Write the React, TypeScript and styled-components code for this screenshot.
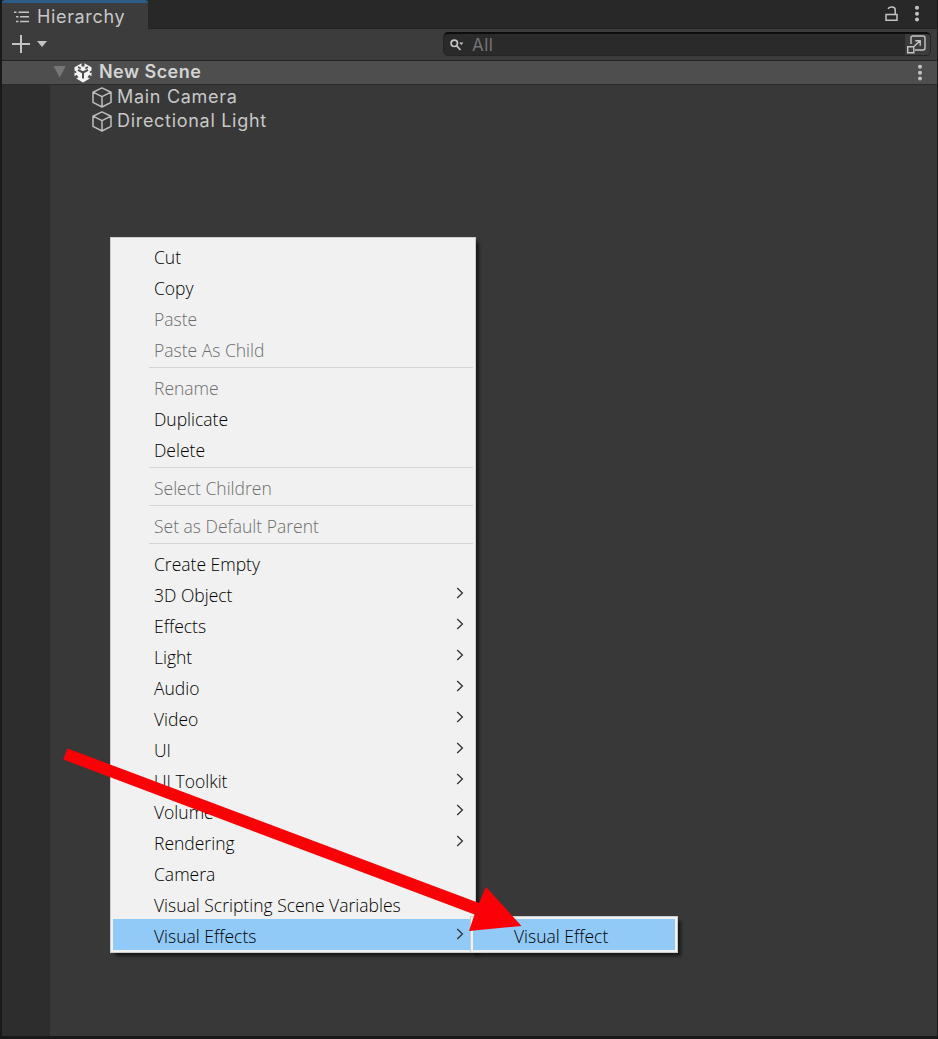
import React from "react";
import styled, { createGlobalStyle } from "styled-components";

const GlobalStyle = createGlobalStyle`
  * { box-sizing: border-box; }
  body { margin: 0; background: #191919; }
`;

const Window = styled.div`
  position: relative;
  display: flex;
  flex-direction: column;
  width: 938px;
  height: 1039px;
  padding: 0 1px 3px 2px;
  overflow: hidden;
  background: #191919;
  font-family: Inter, "Liberation Sans", sans-serif;
  color: #c8c8c8;
`;

const TabBar = styled.div`
  display: flex;
  justify-content: space-between;
  flex: none;
  height: 29px;
  background: #282828;
  border-bottom: 1px solid #232323;
`;

const Tab = styled.div`
  display: flex;
  align-items: center;
  width: 146px;
  height: 29px;
  padding: 2px 0 0 12px;
  gap: 7px;
  background: #3c3c3c;
  border-top: 3px solid #2c5d87;
  border-radius: 3px 3px 0 0;
`;

const Label = styled.span<{ $size?: number; $spacing: number; $bold?: boolean }>`
  font-size: ${(p) => p.$size ?? 18}px;
  line-height: 24px;
  letter-spacing: ${(p) => p.$spacing}px;
  font-weight: ${(p) => (p.$bold ? 600 : 400)};
  white-space: nowrap;
`;

const TabActions = styled.div`
  display: flex;
  gap: 16px;
  padding: 5px 17px 0 0;
`;

const Toolbar = styled.div`
  display: flex;
  justify-content: space-between;
  flex: none;
  height: 32px;
  padding: 3px 6px 0 9px;
  background: #3c3c3c;
  border-bottom: 1px solid #222;
`;

const SearchBox = styled.div`
  display: flex;
  width: 488px;
  height: 24px;
  background: #2a2a2a;
  border: 1px solid #242424;
  border-top: 2px solid #0d0d0d;
  border-radius: 5px;
  overflow: hidden;
`;

const SearchField = styled.div`
  display: flex;
  flex: 1;
  align-items: center;
  gap: 8px;
  padding-left: 6px;
  color: #747474;
`;

const PickerButton = styled.div`
  width: 25px;
  height: 22px;
  background: #3c3c3c;
`;

const SceneRow = styled.div`
  display: flex;
  align-items: center;
  flex: none;
  height: 24px;
  padding: 0 14px 1px 51px;
  background: #4e4e4e;
  border-bottom: 1px solid #2a2a2a;
`;

const SceneName = styled.div`
  flex: 1;
  padding-left: 6px;
  color: #d4d4d4;
`;

const Body = styled.div`
  display: flex;
  flex: 1;
`;

const Gutter = styled.div`
  width: 48px;
  background: #2d2d2d;
`;

const Tree = styled.div`
  flex: 1;
  background: #383838;
`;

const TreeItem = styled.div`
  display: flex;
  align-items: center;
  height: 24px;
  padding: 0 0 1px 42px;
  gap: 5px;
  svg { margin-top: 2px; }
`;

const Menu = styled.div<{ $x: number; $y: number; $width: number }>`
  position: absolute;
  left: ${(p) => p.$x}px;
  top: ${(p) => p.$y}px;
  width: ${(p) => p.$width}px;
  padding: 2px;
  background: #f1f1f1;
  border: 1px solid #ccc;
  box-shadow: 4px 4px 3px -1px rgba(0, 0, 0, 0.55);
  font-family: "Open Sans", "Noto Sans", sans-serif;
`;

const MenuRow = styled.div<{ $disabled?: boolean; $active?: boolean }>`
  display: flex;
  align-items: center;
  justify-content: space-between;
  height: 31px;
  padding: 3px 9px 0 41px;
  color: ${(p) => (p.$disabled ? "#6d6d6d" : "#000")};
  background: ${(p) => (p.$active ? "#91c9f7" : "transparent")};
  svg { margin-top: -5px; }
`;

const MenuText = styled.span<{ $spacing: number }>`
  font-size: 17.5px;
  line-height: 24px;
  font-weight: 350;
  letter-spacing: ${(p) => p.$spacing}px;
  white-space: nowrap;
`;

const Separator = styled.div`
  height: 1px;
  margin: 3px 0 3px 36px;
  background: #d4d4d4;
`;

const Annotation = styled.svg`
  position: absolute;
  left: 0;
  top: 0;
  pointer-events: none;
`;

const Cube = () => (
  <svg width="20" height="21" viewBox="0 0 20 21" fill="none" stroke="#bdbdbd" strokeWidth="1.5" strokeLinejoin="round">
    <path d="M10 .9 19 5.2V15.4L10 20 1 15.4V5.2ZM1 5.2 10 9.7 19 5.2M10 9.7V20" />
  </svg>
);

const Dots = () => (
  <svg width="6" height="17" viewBox="0 0 6 17" fill="#c4c4c4">
    <circle cx="3" cy="2.7" r="2" />
    <circle cx="3" cy="8.7" r="2" />
    <circle cx="3" cy="14.6" r="2" />
  </svg>
);

const Chevron = () => (
  <svg width="8" height="12" viewBox="0 0 8 12" fill="none" stroke="#333" strokeWidth="1.3">
    <path d="M1.2 1 6.4 6 1.2 11" />
  </svg>
);

type Entry = { label: string; spacing?: number; disabled?: boolean; sub?: boolean; active?: boolean } | null;

const entries: Entry[] = [
  { label: "Cut" },
  { label: "Copy" },
  { label: "Paste", disabled: true },
  { label: "Paste As Child", disabled: true },
  null,
  { label: "Rename", disabled: true },
  { label: "Duplicate" },
  { label: "Delete" },
  null,
  { label: "Select Children", disabled: true },
  null,
  { label: "Set as Default Parent", disabled: true },
  null,
  { label: "Create Empty" },
  { label: "3D Object", sub: true },
  { label: "Effects", sub: true },
  { label: "Light", sub: true },
  { label: "Audio", sub: true },
  { label: "Video", sub: true },
  { label: "UI", sub: true },
  { label: "UI Toolkit", sub: true },
  { label: "Volume", sub: true },
  { label: "Rendering", sub: true },
  { label: "Camera" },
  { label: "Visual Scripting Scene Variables" },
  { label: "Visual Effects", sub: true, active: true },
];

export default function App() {
  return (
    <>
      <GlobalStyle />
      <Window>
        <TabBar>
          <Tab>
            <svg width="16" height="12" viewBox="0 0 16 12" stroke="#c4c4c4" strokeWidth="1.4">
              <path d="M0 1.2H2.5M4.5 1.2H15M2 5.8H4.5M6 5.8H15M2 10.5H4.5M6 10.5H15" />
            </svg>
            <Label $spacing={0.65}>Hierarchy</Label>
          </Tab>
          <TabActions>
            <svg width="13" height="17" viewBox="0 0 13 17" fill="none" stroke="#c4c4c4" strokeWidth="1.5">
              <path d="M1 9.5H12V15.3H1ZM10.2 9.5V5Q10.2 2 7 2 4.2 2 3 3.7" />
            </svg>
            <Dots />
          </TabActions>
        </TabBar>
        <Toolbar>
          <svg width="40" height="24" viewBox="0 0 40 24" fill="#c4c4c4">
            <path d="M9 3H11V11H19V13H11V21H9V13H1V11H9ZM26 9H36L31 15Z" />
          </svg>
          <SearchBox>
            <SearchField>
              <svg width="14" height="12" viewBox="0 0 14 12" fill="none" stroke="#c4c4c4" strokeWidth="1.7">
                <circle cx="4.3" cy="4.3" r="3.2" />
                <path d="M6.5 6.7 10.5 11" />
                <path d="M9.2 3.5H13.4L11.3 6Z" fill="#c4c4c4" stroke="none" />
              </svg>
              <Label $size={17} $spacing={0.4}>All</Label>
            </SearchField>
            <PickerButton>
              <svg width="25" height="22" viewBox="0 0 25 22" fill="none" stroke="#c4c4c4" strokeWidth="1.4">
                <path d="M6 10V4Q6 2 8 2H18Q20 2 20 4V14Q20 16 18 16H10M2.7 12.8H8.8V18.8H2.7ZM8.5 13 15 6.7M10.3 6.7H15.2V11.8" />
              </svg>
            </PickerButton>
          </SearchBox>
        </Toolbar>
        <SceneRow>
          <svg width="14" height="12" viewBox="0 0 14 12" fill="#767676">
            <path d="M.5 0H12.8L6.7 11.5Z" />
          </svg>
          <svg width="20" height="21" viewBox="0 0 20 21" style={{ marginLeft: 6 }}>
            <path d="M10 .5 18.5 5.2V15.6L10 20.5 1.5 15.6V5.2Z" fill="#f4f4f4" />
            <path d="M10 0V4.5M1 16.3 4.6 14M19 16.3 15.4 14" stroke="#4e4e4e" strokeWidth="3" />
            <path d="M10 10.5V16.5M10 10.5 5 7.8M10 10.5 15 7.8" stroke="#4e4e4e" strokeWidth="2" />
            <path d="M0 8.8 3.2 10.5M20 8.8 16.8 10.5M5 5 7.8 6.5M15 5 12.2 6.5" stroke="#4e4e4e" strokeWidth="1.6" />
          </svg>
          <SceneName>
            <Label $spacing={0.45} $bold>New Scene</Label>
          </SceneName>
          <Dots />
        </SceneRow>
        <Body>
          <Gutter />
          <Tree>
            <TreeItem>
              <Cube />
              <Label $spacing={0.7}>Main Camera</Label>
            </TreeItem>
            <TreeItem>
              <Cube />
              <Label $spacing={0.7}>Directional Light</Label>
            </TreeItem>
          </Tree>
        </Body>

        <Menu $x={110} $y={237} $width={366}>
          {entries.map((e, i) =>
            e ? (
              <MenuRow key={i} $disabled={e.disabled} $active={e.active}>
                <MenuText $spacing={e.spacing ?? 0}>{e.label}</MenuText>
                {e.sub && <Chevron />}
              </MenuRow>
            ) : (
              <Separator key={i} />
            )
          )}
        </Menu>
        <Menu $x={470} $y={916} $width={208}>
          <MenuRow $active>
            <MenuText $spacing={0}>Visual Effect</MenuText>
          </MenuRow>
        </Menu>

        <Annotation width="938" height="1039" viewBox="0 0 938 1039">
          <path d="M67.5 748.5 479 903 486 887 521.5 926 469 931 474.5 914.5 63.3 759.5Z" fill="#fb0007" />
        </Annotation>
      </Window>
    </>
  );
}
